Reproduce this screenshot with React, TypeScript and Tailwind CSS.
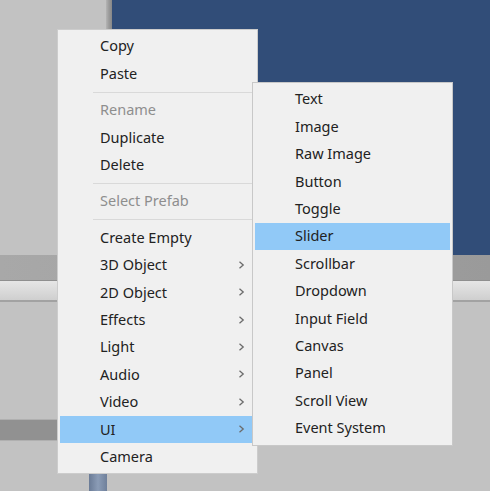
import React from "react"

type Item = { label: string; disabled?: boolean; sub?: boolean; active?: boolean } | "sep"

const mainItems: Item[] = [
  { label: "Copy" },
  { label: "Paste" },
  "sep",
  { label: "Rename", disabled: true },
  { label: "Duplicate" },
  { label: "Delete" },
  "sep",
  { label: "Select Prefab", disabled: true },
  "sep",
  { label: "Create Empty" },
  { label: "3D Object", sub: true },
  { label: "2D Object", sub: true },
  { label: "Effects", sub: true },
  { label: "Light", sub: true },
  { label: "Audio", sub: true },
  { label: "Video", sub: true },
  { label: "UI", sub: true, active: true },
  { label: "Camera" },
]

const uiItems: Item[] = [
  { label: "Text" },
  { label: "Image" },
  { label: "Raw Image" },
  { label: "Button" },
  { label: "Toggle" },
  { label: "Slider", active: true },
  { label: "Scrollbar" },
  { label: "Dropdown" },
  { label: "Input Field" },
  { label: "Canvas" },
  { label: "Panel" },
  { label: "Scroll View" },
  { label: "Event System" },
]

function Chevron() {
  return (
    <svg width="7" height="8" viewBox="0 0 7 8" className="mt-[1px] shrink-0">
      <path d="M1.5 0.8 L5.2 4 L1.5 7.2" fill="none" stroke="#6b6b6b" strokeWidth="1.3" />
    </svg>
  )
}

function MenuList({ items }: { items: Item[] }) {
  return (
    <div className="flex flex-col">
      {items.map((it, i) =>
        it === "sep" ? (
          <div key={i} className="flex h-[9px] items-center pl-[35px]">
            <div className="h-px w-full bg-[#d9d9d9]" />
          </div>
        ) : (
          <div
            key={i}
            className={`mx-[2px] flex h-[27.4px] items-center pb-[2px] pl-[40px] pr-[10px] ${
              it.active ? "bg-[#91c9f7]" : ""
            }`}
          >
            <span className={`flex-1 ${it.disabled ? "text-[#8e8e8e]" : "text-[#222222]"}`}>{it.label}</span>
            {it.sub && <Chevron />}
          </div>
        )
      )}
    </div>
  )
}

export default function App() {
  return (
    <div
      className="relative h-[491px] w-[490px] overflow-hidden bg-[#c2c2c2] text-[14.5px] leading-none"
      style={{ fontFamily: '"Noto Sans", "Liberation Sans", sans-serif' }}
    >
      {/* background editor panels */}
      <div className="flex h-full flex-col">
        <div className="flex h-[255px]">
          <div className="w-[106px] bg-[#c2c2c2]" />
          <div className="w-[6px] bg-linear-to-r from-[#b4b4b4] via-[#9a9a9a] to-[#878787]" />
          <div className="flex-1 bg-[#314d78]" />
        </div>
        <div className="h-[26px] bg-linear-to-r from-[#a8a8a8] to-[#9a9a9a] border-b border-[#8f8f8f]" />
        <div className="h-[21px] bg-linear-to-b from-[#e6e6e6] to-[#cfcfcf] border-b-2 border-[#a2a2a2]" />
        <div className="h-[117px]" />
        <div className="h-[22px] w-[100px] border-y border-[#b0b0b0] bg-[#919191]" />
        <div className="h-[31px]" />
        <div className="ml-[89px] w-[18px] flex-1 bg-linear-to-r from-[#6a7b96] via-[#8b9cb6] to-[#6f809b]" />
      </div>

      {/* context menu */}
      <div className="absolute left-[57px] top-[29px] w-[201px] border border-[#cccccc] bg-[#f0f0f0] pb-[2px] pt-[3px]">
        <MenuList items={mainItems} />
      </div>

      {/* UI submenu */}
      <div className="absolute left-[252px] top-[82px] w-[201px] border border-[#c8c8c8] bg-[#f0f0f0] pb-[3px] pt-[3px]">
        <MenuList items={uiItems} />
      </div>
    </div>
  )
}
